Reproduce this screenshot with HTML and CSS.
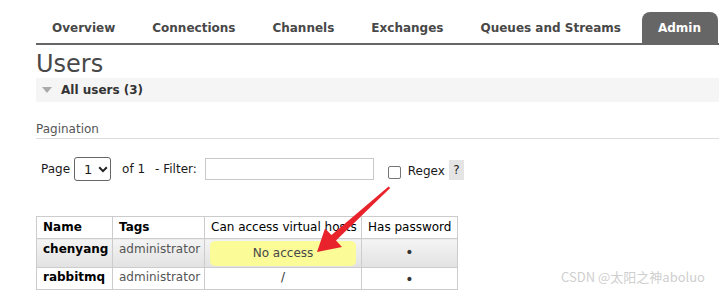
FILE: index.html
```html
<!DOCTYPE html>
<html lang="en">

<head>
    <meta charset="UTF-8">
    <title>RabbitMQ Management - Users</title>
    <link rel="stylesheet" href="styles.css">
</head>

<body>
    <div class="page">
        <ul class="tabs">
            <li class="tab">Overview</li>
            <li class="tab">Connections</li>
            <li class="tab">Channels</li>
            <li class="tab">Exchanges</li>
            <li class="tab">Queues and Streams</li>
            <li class="tab active">Admin</li>
        </ul>

        <h1 class="title">Users</h1>

        <div class="section-bar">
            <span class="toggle"></span>
            <span class="section-name">All users (3)</span>
        </div>

        <h3 class="pagination-title">Pagination</h3>

        <div class="filter-row">
            <span class="label">Page</span>
            <div class="select">
                <span>1</span>
                <svg width="10" height="7" viewBox="0 0 10 7">
                    <path d="M1.2 1.3 L5 5.1 L8.8 1.3" fill="none" stroke="#222" stroke-width="2" />
                </svg>
            </div>
            <span class="label of">of 1</span>
            <span class="label filter">- Filter:</span>
            <div class="text-input"></div>
            <span class="checkbox"></span>
            <span class="label regex">Regex</span>
            <span class="help">?</span>
        </div>

        <table class="users">
            <colgroup>
                <col class="c-name">
                <col class="c-tags">
                <col class="c-vhosts">
                <col class="c-pass">
            </colgroup>
            <thead>
                <tr>
                    <th class="strong">Name</th>
                    <th class="strong">Tags</th>
                    <th>Can access virtual hosts</th>
                    <th>Has password</th>
                </tr>
            </thead>
            <tbody>
                <tr class="alt">
                    <td class="user">chenyang</td>
                    <td class="tag">administrator</td>
                    <td class="vhost-cell"><div class="no-access">No access</div></td>
                    <td class="center"><span class="dot">&bull;</span></td>
                </tr>
                <tr class="plain">
                    <td class="user">rabbitmq</td>
                    <td class="tag">administrator</td>
                    <td class="center">/</td>
                    <td class="center"><span class="dot">&bull;</span></td>
                </tr>
            </tbody>
        </table>

        <!-- annotation arrow drawn over the screenshot -->
        <svg class="arrow" width="719" height="291" viewBox="0 0 719 291">
            <polygon points="317,252 342,247 336,240.5 390.2,188 388.6,186.4 331.5,235 325,228.5" fill="#e8232b" />
        </svg>

        <div class="watermark">CSDN @太阳之神aboluo</div>
    </div>
</body>

</html>
```

FILE: styles.css
```css
body,
html {
    margin: 0;
    padding: 0;
    font-family: "DejaVu Sans", Verdana, sans-serif;
    font-size: 12px;
    color: #484848;
    background: #fff;
    overflow: hidden;
}

.page {
    position: relative;
    width: 719px;
    height: 291px;
    padding-left: 36px;
    box-sizing: border-box;
    overflow: hidden;
}

/* top navigation */
.tabs {
    list-style: none;
    margin: 12px 0 0 0;
    padding: 0;
    display: flex;
    border-bottom: 2px solid #666;
}

.tab {
    height: 31px;
    line-height: 33px;
    padding: 0 16px;
    margin-right: 5px;
    font-weight: bold;
    color: #484848;
    white-space: nowrap;
}

.tab.active {
    padding: 0 17px 0 16px;
    background: #666;
    color: #fff;
    border-radius: 8px 8px 0 0;
}

.title {
    margin: 5px 0 0 0;
    font-size: 24px;
    line-height: 28px;
    font-weight: normal;
    color: #484848;
}

.section-bar {
    height: 24px;
    background: #f5f5f5;
    display: flex;
    align-items: center;
    padding-left: 6px;
}

.toggle {
    width: 0;
    height: 0;
    border-left: 5px solid transparent;
    border-right: 5px solid transparent;
    border-top: 6px solid #aaa;
    margin-right: 9px;
}

.section-name {
    font-weight: bold;
    color: #333;
}

.pagination-title {
    margin: 20px 0 0 0;
    font-size: 12px;
    line-height: 15px;
    font-weight: normal;
    color: #555;
    padding-bottom: 1px;
    border-bottom: 1px solid #ddd;
}

/* filter line */
.filter-row {
    display: flex;
    align-items: center;
    margin-top: 18px;
    padding-left: 5px;
    color: #1a1a1a;
}

.label {
    line-height: 15px;
}

.select {
    margin-left: 4px;
    width: 37px;
    height: 24px;
    box-sizing: border-box;
    border: 1px solid #666;
    border-radius: 3px;
    display: flex;
    align-items: center;
    padding-left: 9px;
    gap: 6px;
    font-size: 13px;
}

.of {
    margin-left: 11px;
}

.filter {
    margin-left: 10px;
}

.text-input {
    margin-left: 8px;
    width: 169px;
    height: 22px;
    box-sizing: border-box;
    border: 1px solid #c8c8c8;
}

.checkbox {
    margin-left: 14px;
    margin-top: 6px;
    width: 13px;
    height: 13px;
    box-sizing: border-box;
    border: 1px solid #767676;
    border-radius: 2px;
}

.regex {
    margin-left: 7px;
    margin-top: 4px;
}

.help {
    margin-left: 4px;
    margin-top: 2px;
    width: 15px;
    height: 20px;
    line-height: 20px;
    text-align: center;
    background: #e4e4e4;
    color: #222;
}

/* users table */
.users {
    margin-top: 35px;
    width: 421px;
    table-layout: fixed;
    border-collapse: collapse;
}

.c-name { width: 76px; }
.c-tags { width: 92px; }
.c-vhosts { width: 157px; }
.c-pass { width: 96px; }

.users th,
.users td {
    border: 1px solid #ccc;
    padding: 3px 6px 3px 6px;
    line-height: 15px;
    text-align: left;
    vertical-align: top;
    white-space: nowrap;
}

.users th {
    font-weight: normal;
    color: #000;
    background: #fff;
}

.users th.strong {
    font-weight: bold;
}

.users tr.alt td {
    background: linear-gradient(#f4f4f4, #e2e2e2);
}

.users tr.plain td {
    padding-top: 2px;
    padding-bottom: 1px;
}

.users td.user {
    font-weight: bold;
    color: #000;
}

.users td.tag {
    color: #555;
}

.users td.center {
    text-align: center;
    color: #333;
}

.dot {
    display: inline-block;
    font-size: 14px;
    margin-top: 3px;
}

.users tr.plain .dot {
    margin-top: 2px;
    line-height: 14px;
}

.users td.vhost-cell {
    padding: 2px 5px 1px 5px;
}

.no-access {
    background: #fbfb97;
    border-radius: 5px;
    padding: 5px 0;
    text-align: center;
    color: #484848;
}

.arrow {
    position: absolute;
    top: 0;
    left: 0;
    pointer-events: none;
}

.watermark {
    position: absolute;
    right: 14px;
    top: 267px;
    font-family: "Noto Sans CJK SC", "DejaVu Sans", sans-serif;
    font-size: 13px;
    color: #cfcfcf;
    white-space: nowrap;
}
```
